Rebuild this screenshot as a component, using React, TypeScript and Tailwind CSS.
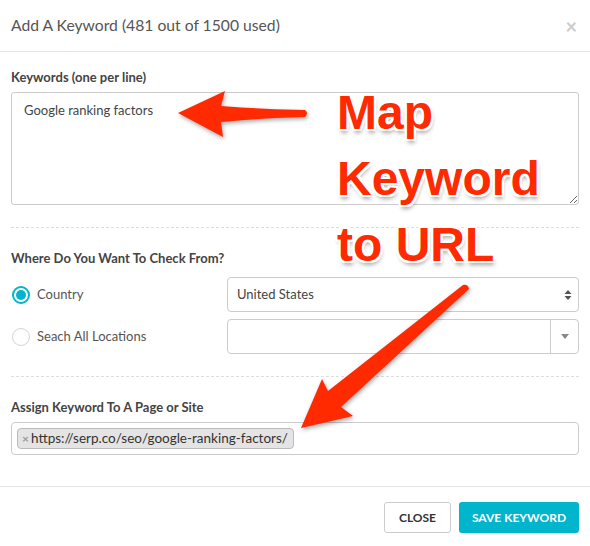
import React from "react";

const teal = "bg-[#00b5cc]";

function Radio({ checked }: { checked?: boolean }) {
  return checked ? (
    <span className="flex h-[18px] w-[18px] shrink-0 items-center justify-center rounded-full border-2 border-[#00b5cc] bg-white">
      <span className={`h-[10px] w-[10px] rounded-full ${teal}`} />
    </span>
  ) : (
    <span className="h-[18px] w-[18px] shrink-0 rounded-full border border-[#d4d4d4] bg-white" />
  );
}

function Overlay() {
  return (
    <>
      <svg
        className="pointer-events-none absolute inset-0 drop-shadow-[1px_2px_2px_rgba(0,0,0,0.35)]"
        width="590"
        height="546"
        viewBox="0 0 590 546"
      >
        {/* left arrow into the textarea */}
        <path
          d="M178 113 L225 91 L221 106 Q260 109 305 110 Q309 113 305 117 Q262 118 221 122 L223 137 Z"
          fill="#ff2a00"
        />
        {/* diagonal arrow into the url field */}
        <path
          d="M301 428 L322 379 L328 391 L463 285 Q468 284 469 289 L341 407 L353 416 Z"
          fill="#ff2a00"
        />
      </svg>
      <div className="pointer-events-none absolute left-[337px] top-[80px] font-['Liberation_Sans',Arial,sans-serif] text-[48px] font-bold leading-[66px] text-[#ff2a00] [text-shadow:2px_2px_0_#fff,-2px_-2px_0_#fff,2px_-2px_0_#fff,-2px_2px_0_#fff,0_2px_0_#fff,0_-2px_0_#fff,2px_0_0_#fff,-2px_0_0_#fff,1px_4px_4px_rgba(0,0,0,0.35)]">
        <div>Map</div>
        <div>Keyword</div>
        <div>to URL</div>
      </div>
    </>
  );
}

export default function App() {
  return (
    <div className="relative h-[546px] w-[590px] overflow-hidden bg-white font-['Lato','Open_Sans',sans-serif] text-[#555]">
      {/* Header */}
      <div className="flex h-[52px] items-center justify-between border-b border-[#e5e5e5] pl-[11px] pr-[13px]">
        <h1 className="text-[15.7px] font-normal text-[#555]">Add A Keyword (481 out of 1500 used)</h1>
        <span className="text-[20px] font-bold leading-none text-[#cccccc]">×</span>
      </div>

      {/* Body */}
      <div className="px-[11px] pb-[31px] pt-[16px]">
        <label className="block text-[13px] font-bold leading-[18px] text-[#444]">Keywords (one per line)</label>
        <textarea
          readOnly
          value="Google ranking factors"
          className="mt-[6px] block h-[113px] w-full rounded-[3px] border border-[#cccccc] px-[12px] py-[8px] text-[13px] text-[#444] outline-none"
        />

        <div className="mt-[22px] border-t border-dashed border-[#dddddd]" />

        <label className="mt-[21px] block text-[13px] font-bold leading-[18px] text-[#444]">
          Where Do You Want To Check From?
        </label>
        <div className="mt-[10px] flex flex-col gap-[7px]">
          <div className="flex items-center">
            <div className="flex w-[216px] items-center gap-[7px] pl-[1px]">
              <Radio checked />
              <span className="text-[13px] text-[#555]">Country</span>
            </div>
            <div className="flex h-[35px] flex-1 items-center justify-between rounded-[4px] border border-[#cccccc] pl-[9px] pr-[6px]">
              <span className="text-[13px] text-[#444]">United States</span>
              <svg width="8" height="12" viewBox="0 0 8 12">
                <path d="M4 1 L7.5 5 L0.5 5 Z M4 11 L7.5 7 L0.5 7 Z" fill="#555" />
              </svg>
            </div>
          </div>
          <div className="flex items-center">
            <div className="flex w-[216px] items-center gap-[7px] pl-[1px]">
              <Radio />
              <span className="text-[13px] text-[#555]">Seach All Locations</span>
            </div>
            <div className="flex h-[35px] flex-1 rounded-[4px] border border-[#cccccc]">
              <div className="flex-1" />
              <div className="flex w-[28px] items-center justify-center border-l border-[#cccccc]">
                <svg width="8" height="5" viewBox="0 0 8 5">
                  <path d="M0 0 L8 0 L4 5 Z" fill="#888" />
                </svg>
              </div>
            </div>
          </div>
        </div>

        <div className="mt-[22px] border-t border-dashed border-[#dddddd]" />

        <label className="mt-[21px] block text-[13px] font-bold leading-[18px] text-[#444]">
          Assign Keyword To A Page or Site
        </label>
        <div className="mt-[6px] flex h-[33px] items-center rounded-[4px] border border-[#cccccc] px-[5px]">
          <span className="flex h-[21px] items-center gap-[2px] rounded-[4px] border border-[#bbbbbb] bg-[#e4e4e4] pl-[4px] pr-[5px]">
            <span className="text-[12px] font-bold leading-none text-[#999]">×</span>
            <span className="text-[13.5px] text-[#333]">https://serp.co/seo/google-ranking-factors/</span>
          </span>
        </div>
      </div>

      {/* Footer */}
      <div className="flex justify-end gap-[8px] border-t border-[#e5e5e5] px-[11px] pt-[15px]">
        <button className="h-[31px] rounded-[3px] border border-[#cccccc] bg-white px-[14px] text-[12px] font-bold text-[#333]">
          CLOSE
        </button>
        <button className={`h-[31px] w-[120px] rounded-[3px] ${teal} text-[12px] font-bold text-white`}>
          SAVE KEYWORD
        </button>
      </div>

      <Overlay />
    </div>
  );
}
